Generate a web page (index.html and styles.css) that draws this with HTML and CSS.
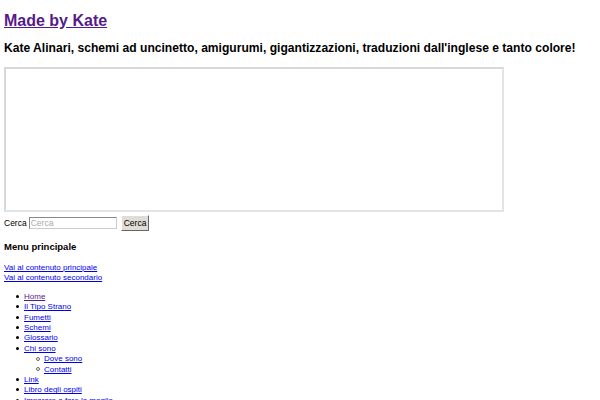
FILE: index.html
```html
<!DOCTYPE html>
<html lang="it">
<head>
    <meta charset="UTF-8">
    <title>Made by Kate</title>
    <link rel="stylesheet" href="styles.css">
</head>
<body>
    <div class="header">
        <h1 class="site-title"><a href="#" class="visited">Made by Kate</a></h1>
        <h2 class="site-description">Kate Alinari, schemi ad uncinetto, amigurumi, gigantizzazioni, traduzioni dall'inglese e tanto colore!</h2>
        <div class="banner"></div>
    </div>

    <form class="search-form">
        <label for="s">Cerca</label>
        <input type="text" id="s" class="search-input" placeholder="Cerca">
        <button type="button" class="search-button">Cerca</button>
    </form>

    <div class="access">
        <h3 class="menu-title">Menu principale</h3>
        <div class="skip-links">
            <a href="#">Vai al contenuto principale</a><br>
            <a href="#">Vai al contenuto secondario</a>
        </div>
        <ul class="menu">
            <li><a href="#" class="visited">Home</a></li>
            <li><a href="#">Il Tipo Strano</a></li>
            <li><a href="#">Fumetti</a></li>
            <li><a href="#">Schemi</a></li>
            <li><a href="#">Glossario</a></li>
            <li><a href="#">Chi sono</a>
                <ul class="sub-menu">
                    <li><a href="#">Dove sono</a></li>
                    <li><a href="#">Contatti</a></li>
                </ul>
            </li>
            <li><a href="#">Link</a></li>
            <li><a href="#">Libro degli ospiti</a></li>
            <li><a href="#">Imparare a fare la maglia</a></li>
        </ul>
    </div>
</body>
</html>
```

FILE: styles.css
```css
body {
    margin: 4px;
    font-family: 'Liberation Sans', Arial, sans-serif;
    font-size: 8px;
    color: #000;
    background: #fff;
}

a {
    color: #0000ee;
}

a.visited {
    color: #551a8b;
}

.site-title {
    font-size: 16px;
    font-weight: bold;
    margin: 8px 0 0;
}

.site-description {
    font-size: 12.1px;
    margin: 11px 0 0;
}

.banner {
    width: 496px;
    height: 141px;
    margin-top: 12px;
    border: 2px solid #e4e4e4;
    border-top-color: #d8d8d8;
    border-left-color: #d8d8d8;
}

.search-form {
    display: flex;
    align-items: center;
    margin-top: 3px;
    font-size: 8.5px;
}

.search-form label {
    margin-right: 2px;
}

.search-input {
    width: 84px;
    height: 8px;
    padding: 1px 1px;
    font: 8.5px 'Liberation Sans', Arial, sans-serif;
    border: 1px solid #888;
    border-right-color: #ccc;
    border-bottom-color: #ccc;
    margin: 0 4px 0 0;
}

.search-input::placeholder {
    color: #aaa;
}

.search-button {
    height: 16px;
    padding: 0 2px;
    font: 8.5px 'Liberation Sans', Arial, sans-serif;
    background: #e0ddd6;
    border: 1px solid #fff;
    border-right-color: #666;
    border-bottom-color: #666;
    margin: 0;
}

.menu-title {
    font-size: 9.5px;
    margin: 10px 0 11px;
}

.skip-links {
    line-height: 10.4px;
}

.menu,
.sub-menu {
    list-style: none;
    line-height: 10.4px;
}

.menu {
    margin: 8px 0 0;
    padding-left: 20px;
}

.sub-menu {
    margin: 0;
    padding-left: 20px;
}

.menu li::before {
    content: "";
    display: inline-block;
    width: 3px;
    height: 3px;
    margin: 0 5px 1px -8px;
    border-radius: 50%;
    background: #000;
    vertical-align: middle;
}

.sub-menu li::before {
    width: 2px;
    height: 2px;
    margin-right: 4px;
    border: 1px solid #666;
    background: none;
}
```
